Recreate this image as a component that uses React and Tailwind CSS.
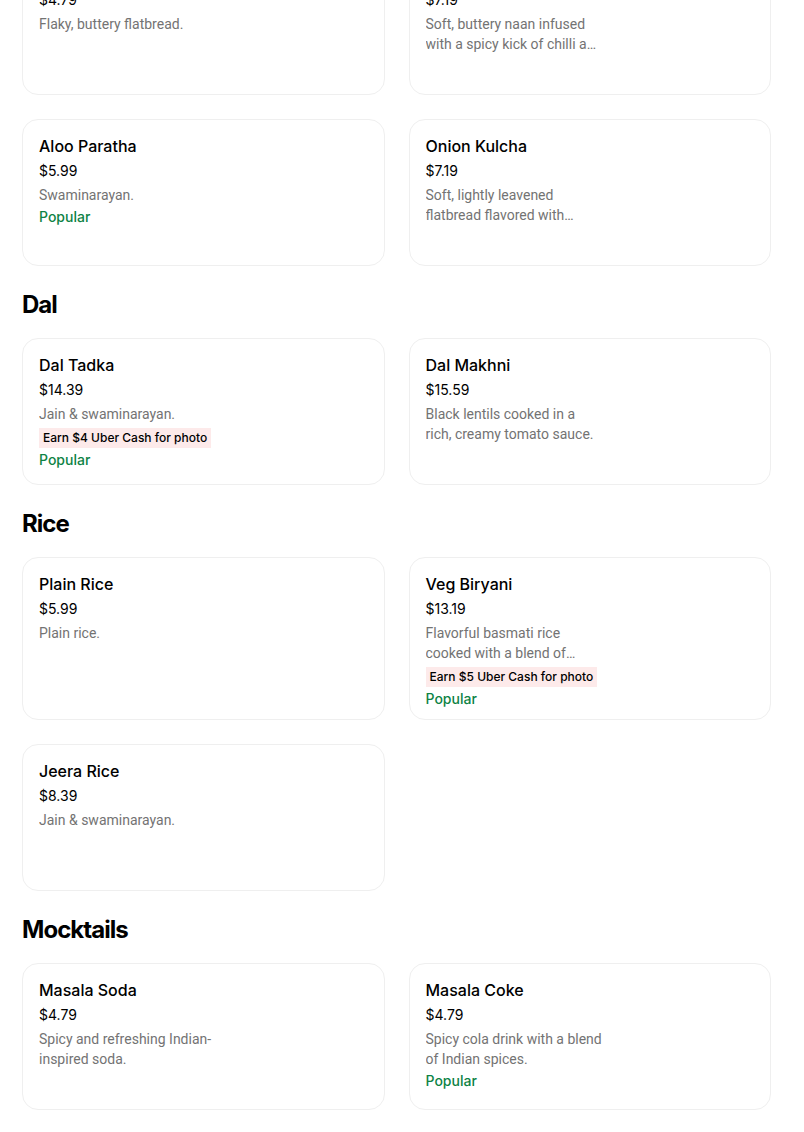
const SECTIONS = [
  {
    title: null,
    items: [
      { name: 'Lachha Paratha', price: '$4.79', desc: 'Flaky, buttery flatbread.' },
      { name: 'Chilli Garlic Naan', price: '$7.19', desc: 'Soft, buttery naan infused with a spicy kick of chilli and garlic.' },
      { name: 'Aloo Paratha', price: '$5.99', desc: 'Swaminarayan.', popular: true },
      { name: 'Onion Kulcha', price: '$7.19', desc: 'Soft, lightly leavened flatbread flavored with onions.' },
    ],
  },
  {
    title: 'Dal',
    items: [
      { name: 'Dal Tadka', price: '$14.39', desc: 'Jain & swaminarayan.', promo: 'Earn $4 Uber Cash for photo', popular: true },
      { name: 'Dal Makhni', price: '$15.59', desc: 'Black lentils cooked in a rich, creamy tomato sauce.' },
    ],
  },
  {
    title: 'Rice',
    items: [
      { name: 'Plain Rice', price: '$5.99', desc: 'Plain rice.' },
      { name: 'Veg Biryani', price: '$13.19', desc: 'Flavorful basmati rice cooked with a blend of aromatic spices and vegetables.', promo: 'Earn $5 Uber Cash for photo', popular: true },
      { name: 'Jeera Rice', price: '$8.39', desc: 'Jain & swaminarayan.' },
    ],
  },
  {
    title: 'Mocktails',
    items: [
      { name: 'Masala Soda', price: '$4.79', desc: 'Spicy and refreshing Indian-inspired soda.' },
      { name: 'Masala Coke', price: '$4.79', desc: 'Spicy cola drink with a blend of Indian spices.', popular: true },
    ],
  },
];

function ItemCard({ item }) {
  return (
    <div className="min-h-[147px] rounded-2xl border border-[#efefef] bg-white px-4 pt-4 pb-[10px]">
      <div className="text-[16px] leading-5 font-medium text-black">{item.name}</div>
      <div className="mt-[5px] text-[14px] leading-5 text-black">{item.price}</div>
      <div className="mt-1 w-[178px] text-[14px] leading-5 text-[#737373] line-clamp-2 font-['Roboto',sans-serif]">{item.desc}</div>
      {item.promo && (
        <div className="mt-1 flex">
          <span className="bg-[#fdeaea] px-1 text-[12px] leading-5 font-medium text-black">{item.promo}</span>
        </div>
      )}
      {item.popular && (
        <div className="mt-0.5 text-[14px] leading-5 font-medium text-[#0e8345]">Popular</div>
      )}
    </div>
  );
}

export default function App() {
  return (
    <div className="min-h-[1132px] bg-white pl-[22px] pr-[33px] pb-10 font-['Inter','Noto_Sans',sans-serif]">
      {SECTIONS.map((s, i) => (
        <section key={i} className={s.title ? 'mt-[23px]' : 'mt-[-52px]'}>
          {s.title && (
            <h2 className="mb-[17px] text-[24px] leading-8 font-bold tracking-[-0.04em] text-black">{s.title}</h2>
          )}
          <div className="grid grid-cols-2 gap-6">
            {s.items.map(it => <ItemCard key={it.name} item={it} />)}
          </div>
        </section>
      ))}
    </div>
  );
}
